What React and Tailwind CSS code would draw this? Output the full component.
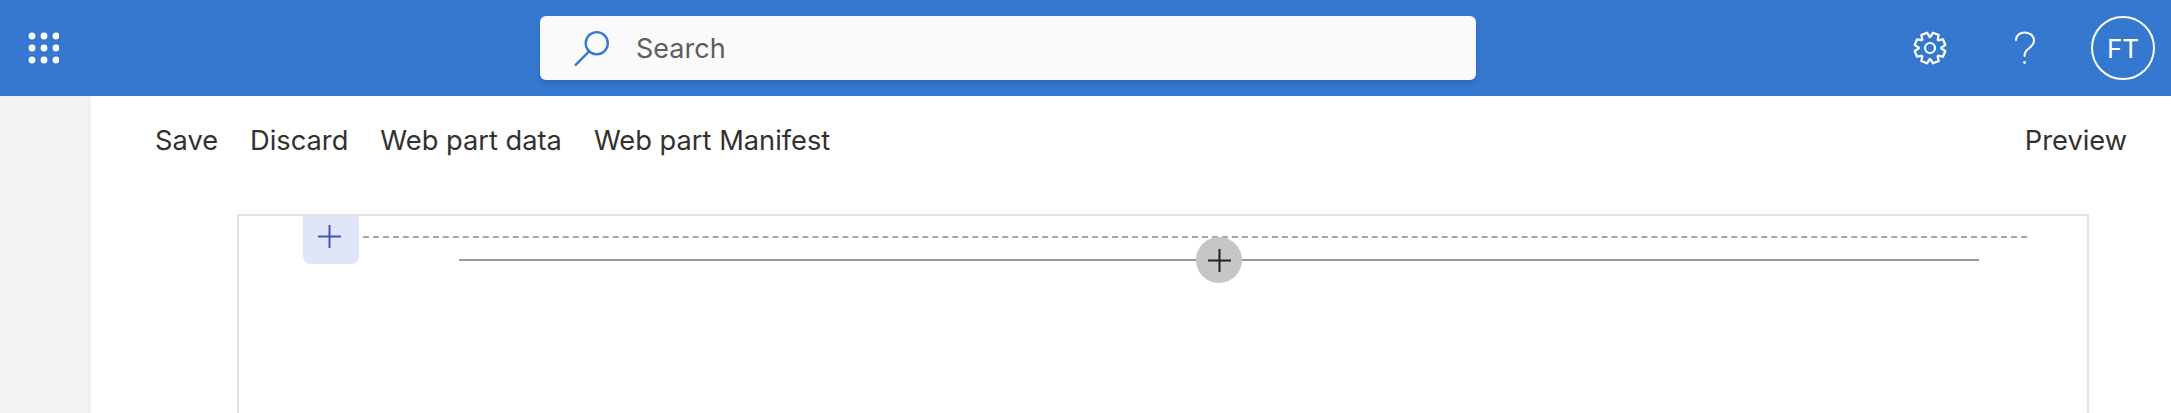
import React from 'react'

const font = { fontFamily: 'Inter, "Open Sans", sans-serif' }

function Waffle() {
  const spots = [33, 45, 57]
  return (
    <svg width="32" height="32" viewBox="28 31 32 32" className="text-white">
      {spots.map((x) =>
        [35, 47, 59].map((y) => <circle key={`${x}-${y}`} cx={x} cy={y} r="3.4" fill="currentColor" />)
      )}
    </svg>
  )
}

function SearchGlass() {
  return (
    <svg width="38" height="38" viewBox="0 0 36 36" fill="none" stroke="#3578cf" strokeWidth="2.2">
      <circle cx="22.5" cy="13.5" r="10.5" />
      <path d="M15.5 21 L2.5 34" strokeLinecap="round" />
    </svg>
  )
}

// eight toothed outline, worked out once from the angles
function gearPath() {
  const points = []
  for (let i = 0; i < 8; i++) {
    const a = (i * Math.PI) / 8 * 2 + Math.PI / 8
    const steps = [
      [-0.36, 11.2],
      [-0.2, 15.6],
      [0.2, 15.6],
      [0.36, 11.2],
    ]
    steps.forEach(([d, r]) => {
      points.push(`${(17 + r * Math.cos(a + d)).toFixed(2)} ${(17 + r * Math.sin(a + d)).toFixed(2)}`)
    })
  }
  return `M${points.join(' L')} Z`
}

function Gear() {
  return (
    <svg width="34" height="34" viewBox="0 0 34 34" fill="none" stroke="white" strokeWidth="2.2" strokeLinejoin="round">
      <path d={gearPath()} />
      <circle cx="17" cy="17" r="5" />
    </svg>
  )
}

function Question() {
  return (
    <svg width="22" height="34" viewBox="0 0 22 34" fill="none" stroke="white" strokeWidth="2">
      <path d="M2 9 C2 4.5 6 1.5 10.5 1.5 C15.5 1.5 20 4.5 20 9.5 C20 14 16.5 16 13.5 18.5 C11.5 20.2 10.5 22 10.5 25" strokeLinecap="round" />
      <circle cx="10.5" cy="31.5" r="1.4" fill="white" stroke="none" />
    </svg>
  )
}

function Plus({ className }) {
  return (
    <svg width="23" height="23" viewBox="0 0 23 23" className={className} stroke="currentColor" strokeWidth="2">
      <path d="M0 11.5 H23 M11.5 0 V23" />
    </svg>
  )
}

export default function App() {
  return (
    <div className="flex h-screen flex-col overflow-hidden bg-white" style={font}>
      <header className="flex h-[96px] shrink-0 items-center bg-[#3578cf]">
        <div className="flex w-[540px] shrink-0 pl-[27px]">
          <Waffle />
        </div>
        <div className="flex h-[64px] w-[936px] items-center rounded-[6px] bg-[#fafafa] pl-[33px] shadow-md">
          <SearchGlass />
          <span className="ml-[25px] pt-[2px] text-[27px] text-[#605e5c]">Search</span>
        </div>
        <div className="flex flex-1 items-center justify-end pr-[16px]">
          <Gear />
          <div className="ml-[67px] mr-[55px]">
            <Question />
          </div>
          <div className="flex h-[64px] w-[64px] items-center justify-center rounded-full border-2 border-white text-[26px] text-white">
            FT
          </div>
        </div>
      </header>

      <div className="flex min-h-0 flex-1">
        <aside className="w-[91px] shrink-0 bg-[#f3f2f1]" />
        <main className="flex min-w-0 flex-1 flex-col">
          <div className="flex h-[118px] shrink-0 items-start justify-between pl-[64px] pr-[44px] pt-[29px] text-[27.25px] leading-[32px] text-[#323130]">
            <div className="flex gap-[32px]">
              <span>Save</span>
              <span>Discard</span>
              <span>Web part data</span>
              <span>Web part Manifest</span>
            </div>
            <span>Preview</span>
          </div>

          <section className="ml-[146px] mr-[82px] flex flex-1 border-2 border-b-0 border-[#e3e3e3]">
            <div className="ml-[64px] flex h-[48px] w-[56px] shrink-0 items-center justify-center rounded-b-[8px] bg-[#e1e5f8] pb-[8px] pr-[3px] text-[#4456b4]">
              <Plus />
            </div>
            <div className="ml-[4px] flex-1 pt-[20px]">
              <div className="mr-[60px] border-t-2 border-dashed border-[#a6a6a6]" />
              <div className="ml-[96px] mr-[108px] -mt-px flex items-center">
                <div className="h-[2px] flex-1 bg-[#999999]" />
                <div className="flex h-[46px] w-[46px] items-center justify-center rounded-full bg-[#c8c6c4] text-[#201f1e]">
                  <Plus />
                </div>
                <div className="h-[2px] flex-1 bg-[#999999]" />
              </div>
            </div>
          </section>
        </main>
      </div>
    </div>
  )
}
